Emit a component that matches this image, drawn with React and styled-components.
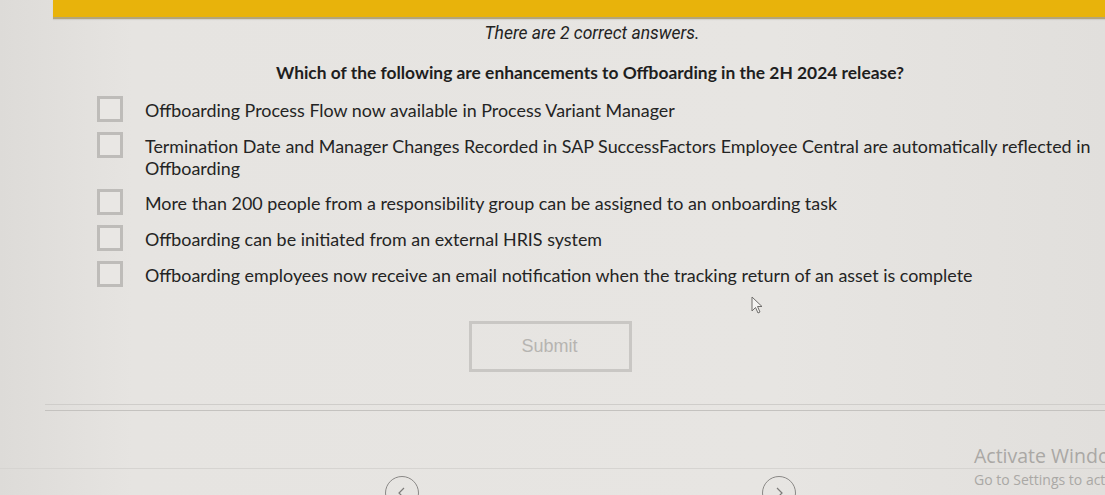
import React from "react";
import styled, { createGlobalStyle } from "styled-components";

const Global = createGlobalStyle`
  html, body { margin: 0; padding: 0; }
  body {
    background: #e4e2df;
    width: 1105px;
    height: 495px;
    overflow: hidden;
    font-family: Lato, "Open Sans", Arial, sans-serif;
  }
`;

const Page = styled.div`
  position: relative;
  width: 1105px;
  height: 495px;
  overflow: hidden;
  background: linear-gradient(90deg, #dddbd8 0%, #e6e4e1 12%, #e7e5e2 70%, #e1dfdc 100%);
`;

const TopBar = styled.div`
  margin-left: 53px;
  height: 17px;
  background: #e8b30b;
  border-bottom: 2px solid #b3a57a;
  box-shadow: 0 1px 1px rgba(0, 0, 0, 0.08);
`;

const Content = styled.div`
  width: 1180px;
  display: flex;
  flex-direction: column;
`;

const Hint = styled.div`
  margin-top: 3px;
  text-align: center;
  font-family: Roboto, Lato, sans-serif;
  font-style: italic;
  font-size: 17.5px;
  line-height: 22px;
  color: #232323;
  padding-left: 4px;
`;

const Question = styled.div`
  margin-top: 18px;
  text-align: center;
  font-weight: 700;
  font-size: 17.4px;
  line-height: 22px;
  color: #1e1e1e;
`;

const Options = styled.div`
  margin-top: 12px;
  padding-left: 97px;
  display: flex;
  flex-direction: column;
  gap: 10px;
`;

const Row = styled.label`
  display: flex;
  align-items: flex-start;
  gap: 22px;
`;

const Box = styled.span`
  flex: none;
  box-sizing: border-box;
  width: 26px;
  height: 26px;
  border: 3px solid #bebcb9;
  background: #e9e7e4;
`;

const OptionText = styled.span`
  margin-top: 3px;
  font-size: 17.9px;
  line-height: 22px;
  color: #242424;
  max-width: 960px;
`;

const SubmitButton = styled.button`
  margin: 34px 0 0 469px;
  width: 163px;
  height: 51px;
  box-sizing: border-box;
  border: 3px solid #c9c7c4;
  background: transparent;
  font-family: Arial, "Liberation Sans", sans-serif;
  font-size: 18px;
  color: #b6b4b1;
  padding: 0;
  text-indent: -2px;
`;

const DoubleRule = styled.div`
  margin: 32px 0 0 45px;
  height: 5px;
  border-top: 1px solid #cfcdca;
  border-bottom: 1px solid #c4c2bf;
`;

const FaintRule = styled.div`
  margin-top: 57px;
  height: 0;
  border-top: 1px solid #d6d4d1;
  width: 1105px;
`;

const NavRow = styled.div`
  display: flex;
  gap: 343px;
  margin: 7px 0 0 385px;
`;

const NavCircle = styled.div`
  width: 34px;
  height: 34px;
  border-radius: 50%;
  border: 1px solid #8a8886;
  display: flex;
  align-items: flex-start;
  justify-content: center;
  padding-top: 10px;
  box-sizing: border-box;
`;

const Watermark = styled.div`
  position: absolute;
  left: 974px;
  top: 443px;
  font-family: "Open Sans", "Noto Sans", sans-serif;
  color: #aaa8a5;
  white-space: nowrap;
`;

const WmTitle = styled.div`
  font-size: 19.5px;
  line-height: 26px;
`;

const WmSub = styled.div`
  font-size: 14px;
  line-height: 20px;
  margin-top: 1px;
`;

const Cursor = styled.svg`
  position: absolute;
  left: 751px;
  top: 296px;
`;

const options = [
  "Offboarding Process Flow now available in Process Variant Manager",
  "Termination Date and Manager Changes Recorded in SAP SuccessFactors Employee Central are automatically reflected in Offboarding",
  "More than 200 people from a responsibility group can be assigned to an onboarding task",
  "Offboarding can be initiated from an external HRIS system",
  "Offboarding employees now receive an email notification when the tracking return of an asset is complete",
];

export default function App() {
  return (
    <Page>
      <Global />
      <TopBar />
      <Content>
        <Hint>There are 2 correct answers.</Hint>
        <Question>Which of the following are enhancements to Offboarding in the 2H 2024 release?</Question>
        <Options>
          {options.map((text, i) => (
            <Row key={i}>
              <Box />
              <OptionText>{text}</OptionText>
            </Row>
          ))}
        </Options>
        <SubmitButton type="button">Submit</SubmitButton>
        <DoubleRule />
        <FaintRule />
        <NavRow>
          <NavCircle>
            <svg width="10" height="12" viewBox="0 0 10 12">
              <path d="M7 1 L2 6 L7 11" fill="none" stroke="#7d7b79" strokeWidth="1.2" />
            </svg>
          </NavCircle>
          <NavCircle>
            <svg width="10" height="12" viewBox="0 0 10 12">
              <path d="M3 1 L8 6 L3 11" fill="none" stroke="#7d7b79" strokeWidth="1.2" />
            </svg>
          </NavCircle>
        </NavRow>
      </Content>
      <Watermark>
        <WmTitle>Activate Windows</WmTitle>
        <WmSub>Go to Settings to activate Windows.</WmSub>
      </Watermark>
      <Cursor width="14" height="20" viewBox="0 0 14 20">
        <path d="M1 1 L1 15 L4.5 11.5 L7 17 L9 16 L6.5 10.5 L11 10.5 Z" fill="#f4f3f1" stroke="#6f6d6b" strokeWidth="1" />
      </Cursor>
    </Page>
  );
}
